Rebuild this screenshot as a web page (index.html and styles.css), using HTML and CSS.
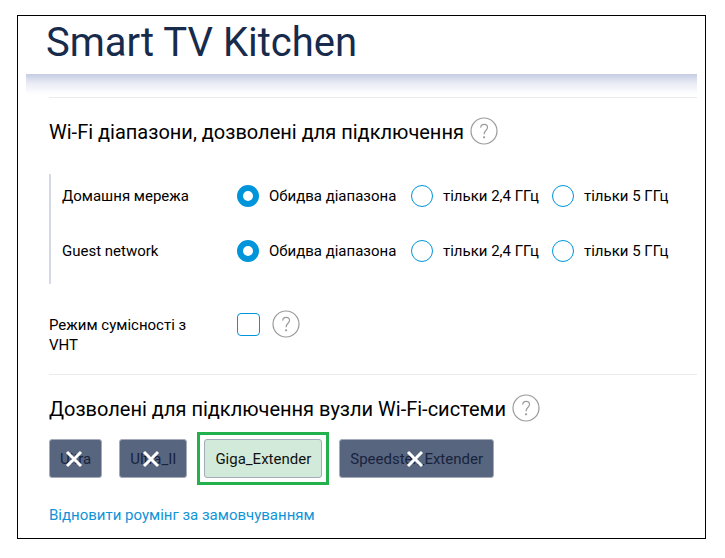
FILE: index.html
```html
<!DOCTYPE html>
<html lang="uk">
<head>
    <meta charset="UTF-8">
    <meta name="viewport" content="width=device-width, initial-scale=1.0">
    <title>Smart TV Kitchen</title>
    <link rel="stylesheet" href="styles.css">
</head>
<body>
    <svg class="sprite" aria-hidden="true">
        <symbol id="icon-help" viewBox="0 0 28 28">
            <circle cx="14" cy="14" r="13" />
            <path d="M10.7 10.6C10.8 8.6 12.2 7.4 14.2 7.4C16.2 7.4 17.5 8.6 17.5 10.4C17.5 12 16.6 12.8 15.6 13.7C14.5 14.7 14.1 15.3 14.1 17.3" />
            <path d="M14.1 19.4V21.2" class="dot" />
        </symbol>
        <symbol id="icon-cross" viewBox="0 0 18 18">
            <path d="M2 2L16 16M16 2L2 16" />
        </symbol>
    </svg>

    <main class="panel">
        <h1 class="panel-title">Smart TV Kitchen</h1>
        <div class="panel-shadow"></div>

        <div class="content">
            <section class="section">
                <h2 class="section-title">
                    Wi-Fi діапазони, дозволені для підключення
                    <button class="help" type="button" aria-label="Довідка"><svg><use href="#icon-help" /></svg></button>
                </h2>

                <div class="bands">
                    <div class="row" role="radiogroup" aria-labelledby="home">
                        <span class="row-label" id="home">Домашня мережа</span>
                        <div class="options">
                            <label class="option"><input type="radio" name="home" checked>Обидва діапазона</label>
                            <label class="option"><input type="radio" name="home">тільки 2,4 ГГц</label>
                            <label class="option"><input type="radio" name="home">тільки 5 ГГц</label>
                        </div>
                    </div>
                    <div class="row" role="radiogroup" aria-labelledby="guest">
                        <span class="row-label" id="guest">Guest network</span>
                        <div class="options">
                            <label class="option"><input type="radio" name="guest" checked>Обидва діапазона</label>
                            <label class="option"><input type="radio" name="guest">тільки 2,4 ГГц</label>
                            <label class="option"><input type="radio" name="guest">тільки 5 ГГц</label>
                        </div>
                    </div>
                </div>

                <div class="vht">
                    <label class="vht-label" for="vht">Режим сумісності з VHT</label>
                    <div class="vht-control">
                        <input type="checkbox" id="vht">
                        <button class="help" type="button" aria-label="Довідка"><svg><use href="#icon-help" /></svg></button>
                    </div>
                </div>
            </section>

            <section class="section">
                <h2 class="section-title">
                    Дозволені для підключення вузли Wi-Fi-системи
                    <button class="help" type="button" aria-label="Довідка"><svg><use href="#icon-help" /></svg></button>
                </h2>

                <div class="nodes">
                    <button class="node blocked" type="button">Ultra<svg><use href="#icon-cross" /></svg></button>
                    <button class="node blocked" type="button">Ultra_II<svg><use href="#icon-cross" /></svg></button>
                    <button class="node allowed" type="button">Giga_Extender</button>
                    <button class="node blocked" type="button">Speedster_Extender<svg><use href="#icon-cross" /></svg></button>
                </div>

                <a class="reset" href="#">Відновити роумінг за замовчуванням</a>
            </section>
        </div>
    </main>
</body>
</html>
```
FILE: styles.css
```css
* {
    box-sizing: border-box;
}

body {
    margin: 0;
    padding: 15px 19px 19px 17px;
    background-color: #fff;
    color: #000;
    font-family: Roboto, Arial, sans-serif;
    font-size: 15px;
    line-height: 20px;
}

.sprite {
    display: none;
}

.panel {
    padding: 0 8px 13px;
    border: 1px solid #000;
}

.panel-title {
    margin: 0;
    padding: 2px 20px 6px;
    color: #172b4d;
    font-size: 40px;
    font-weight: 400;
    line-height: 50px;
}

.panel-shadow {
    height: 23px;
    background: linear-gradient(#c5cde3, #e9ecf5 40%, #fff 90%);
}

.content {
    padding-left: 23px;
}

.section {
    border-top: 1px solid #ebebee;
}

.section-title {
    display: flex;
    align-items: flex-start;
    gap: 6px;
    margin: 0;
    padding-top: 19px;
    font-size: 20px;
    font-weight: 400;
    line-height: 30px;
}

.help {
    display: block;
    width: 28px;
    height: 28px;
    padding: 0;
    border: none;
    background: none;
    cursor: pointer;
}

.help svg {
    display: block;
    width: 28px;
    height: 28px;
    fill: none;
    stroke: #9a9a9a;
    stroke-width: 1.2;
}

.dot {
    stroke-width: 2;
}

.bands {
    margin-top: 27px;
    border-left: 2px solid #d5d9e6;
    padding-left: 11px;
}

.row {
    display: grid;
    grid-template-columns: 175px 1fr;
    align-items: center;
    padding: 11px 0 22px;
}

.options {
    display: grid;
    grid-template-columns: 174px 141px auto;
}

.option {
    display: flex;
    align-items: center;
    gap: 10px;
    white-space: nowrap;
}

input {
    appearance: none;
    flex: none;
    width: 22px;
    height: 22px;
    margin: 0;
    border: 1px solid #0095db;
    background-color: #fff;
}

input[type="radio"] {
    border-radius: 50%;
}

input[type="radio"]:checked {
    border-width: 6px;
}

input[type="checkbox"] {
    width: 23px;
    height: 23px;
    border-radius: 4px;
}

input[type="checkbox"]:checked {
    background-color: #0095db;
}

.vht {
    display: grid;
    grid-template-columns: 188px 1fr;
    align-items: start;
    padding: 26px 0 19px;
}

.vht-label {
    max-width: 160px;
    padding-top: 5px;
}

.vht-control {
    display: flex;
    align-items: center;
    gap: 12px;
}

.nodes {
    display: flex;
    flex-wrap: wrap;
    gap: 17px;
    margin-top: 15px;
}

.node {
    position: relative;
    height: 39px;
    padding: 0 10px;
    border: 1px solid #a5abba;
    border-radius: 3px;
    color: #111;
    font: inherit;
    cursor: pointer;
}

.blocked {
    background-color: #58657f;
    color: #17233d;
}

/* cross drawn over the name of a blocked node */
.blocked svg {
    position: absolute;
    inset: 0 4px 0 0;
    width: 18px;
    height: 18px;
    margin: auto;
    fill: none;
    stroke: #fff;
    stroke-width: 3;
}

.allowed {
    background-color: #d2ead9;
}

/* square green frame around the allowed node */
.allowed::after {
    content: "";
    position: absolute;
    inset: -8px;
    border: 3px solid #22b14c;
}

.reset {
    display: inline-block;
    margin-top: 27px;
    color: #0f94d8;
    text-decoration: none;
}
```
